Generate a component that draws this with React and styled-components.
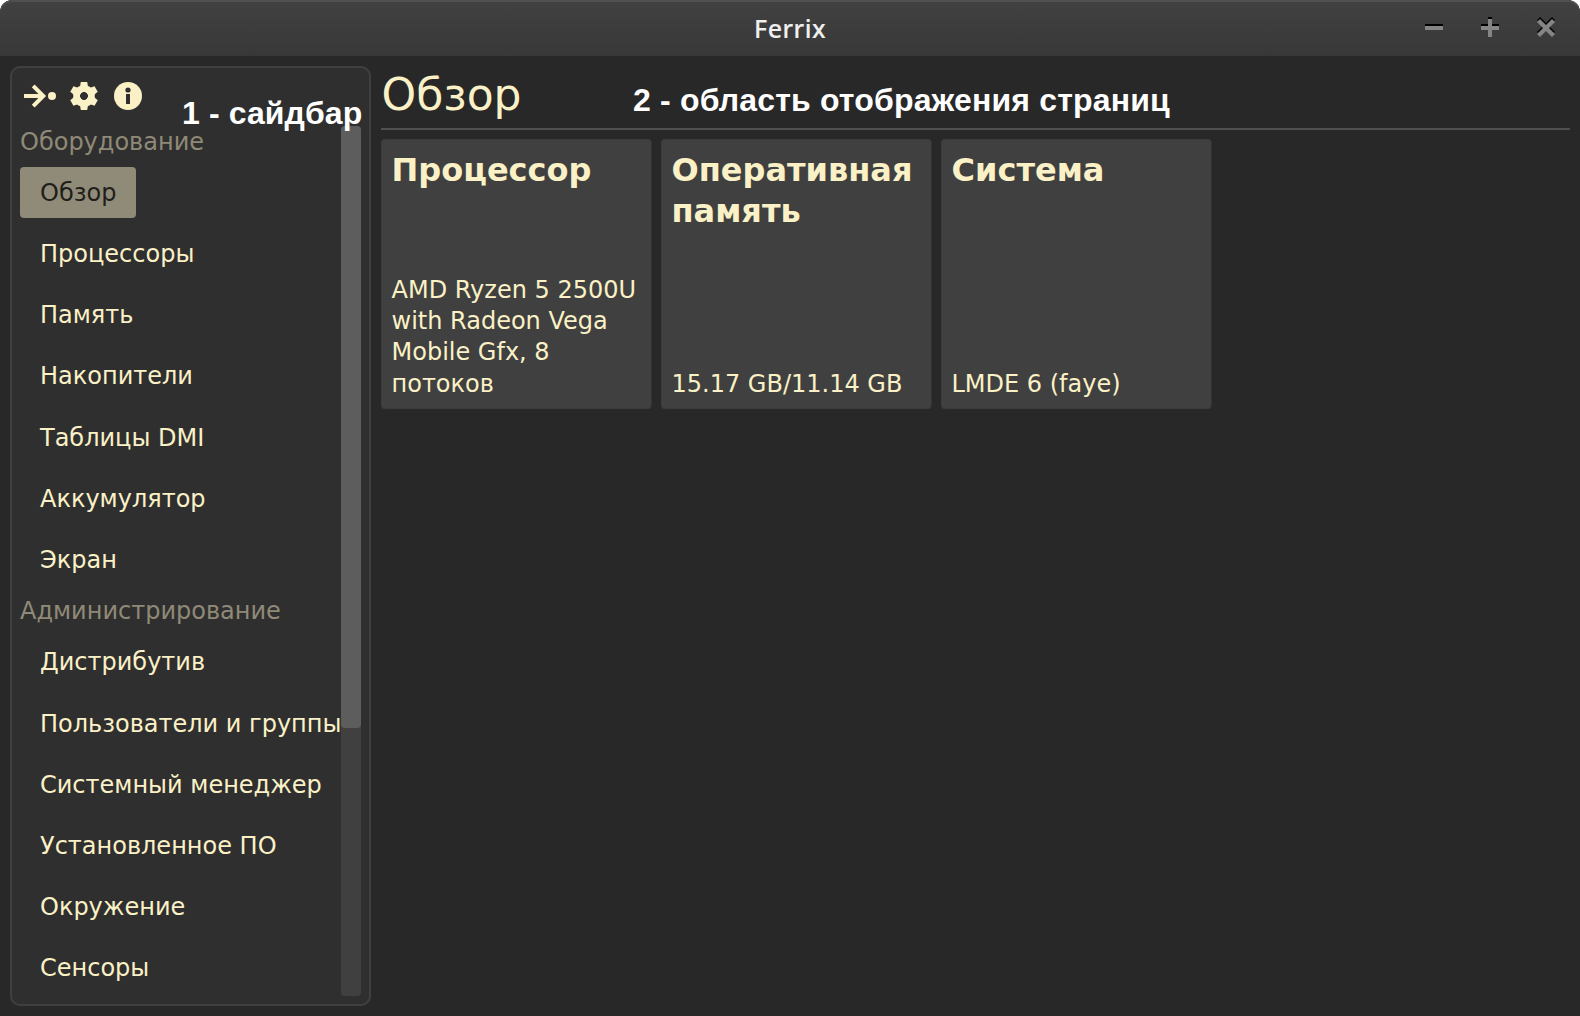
import React from 'react';
import styled, { createGlobalStyle } from 'styled-components';

const cream = '#fbf1c7';

const GlobalStyle = createGlobalStyle`
  * { box-sizing: border-box; }
  body {
    margin: 0;
    background: #fff;
    font-family: "DejaVu Sans", sans-serif;
    overflow: hidden;
  }
`;

const Window = styled.div`
  position: relative;
  display: flex;
  flex-direction: column;
  width: 1580px;
  height: 1016px;
  overflow: hidden;
  border-radius: 12px 12px 0 0;
  background: #282828;
  color: ${cream};
`;

const TitleBar = styled.header`
  flex: none;
  display: grid;
  grid-template-columns: 1fr auto 1fr;
  align-items: center;
  height: 56px;
  padding: 0 24px;
  border-radius: 12px 12px 0 0;
  background: linear-gradient(#414141, #383838);
  box-shadow: inset 0 2px 0 #505050;
`;

const WindowTitle = styled.h1`
  grid-column: 2;
  margin: 0;
  font: 500 25px/32px "Noto Sans", sans-serif;
  letter-spacing: 0.5px;
  -webkit-text-stroke: 0.15px #f0f0f0;
  color: #f0f0f0;
`;

const WindowControls = styled.div`
  display: flex;
  justify-content: flex-end;
  gap: 36px;
`;

const ControlIcon = styled.svg`
  display: block;
  width: 20px;
  height: 22px;
`;

const Body = styled.div`
  flex: 1;
  display: flex;
  gap: 10px;
  min-height: 0;
  padding: 10px;
`;

const Sidebar = styled.aside`
  flex: none;
  display: flex;
  flex-direction: column;
  gap: 10px;
  width: 361px;
  padding: 8px;
  border: 2px solid #404040;
  border-radius: 10px;
  background: #2f2f2f;
`;

const Toolbar = styled.div`
  flex: none;
  display: flex;
  align-items: center;
  gap: 4px;
  height: 40px;
`;

const ToolButton = styled.button`
  width: 40px;
  height: 40px;
  padding: 4px;
  border: 0;
  background: none;
  color: ${cream};

  svg { display: block; width: 32px; height: 32px; }
`;

const ScrollArea = styled.div`
  flex: 1;
  display: flex;
  min-height: 0;
`;

const Nav = styled.nav`
  flex: 1;
  display: flex;
  flex-direction: column;
  align-items: flex-start;
  gap: 10px;
  min-width: 0;
  overflow: hidden;
`;

const SectionLabel = styled.div`
  flex: none;
  height: 31.2px;
  padding-top: 0.62px;
  font-size: 24px;
  line-height: 31.2px;
  color: #8f8a77;
`;

const NavItem = styled.button`
  flex: none;
  padding: 10.64px 20px 9.36px;
  border: 0;
  border-radius: 4px;
  font: 24px/31.2px "DejaVu Sans", sans-serif;
  white-space: nowrap;
  color: ${({ $active }) => ($active ? '#1f1e1a' : cream)};
  background: ${({ $active }) => ($active ? '#8f8b78' : 'transparent')};
`;

const ScrollTrack = styled.div`
  flex: none;
  width: 20px;
  border-radius: 4px;
  background: #404040;
`;

const ScrollThumb = styled.div`
  height: 602px;
  border-radius: 4px;
  background: #5d5d5d;
`;

const Page = styled.main`
  flex: 1;
  min-width: 0;
`;

const PageTitle = styled.h2`
  margin: 0 0 9px;
  padding: 0 0 4.8px 0.5px;
  border-bottom: 2px solid #505050;
  font-size: 44px;
  font-weight: 400;
  line-height: 57.2px;
`;

const Cards = styled.div`
  display: flex;
  gap: 9px;
`;

const Card = styled.section`
  display: flex;
  flex-direction: column;
  justify-content: space-between;
  width: 271px;
  height: 270px;
  padding: 9.55px 9px 8.2px 9.5px;
  border: 1px solid #3c3c3c;
  border-right-color: #323232;
  border-radius: 4px;
  background: #404040;
`;

const CardTitle = styled.h3`
  margin: 0;
  font-size: 32px;
  line-height: 41.6px;
`;

const CardText = styled.p`
  margin: 0;
  font-size: 24px;
  line-height: 31.2px;
`;

const Annotation = styled.div`
  position: absolute;
  left: ${({ $x }) => $x}px;
  top: ${({ $y }) => $y}px;
  font: bold 32px/36px "Liberation Sans", sans-serif;
  letter-spacing: ${({ $spacing }) => $spacing}px;
  white-space: nowrap;
  color: #fff;
`;

const sections = [
  {
    label: 'Оборудование',
    items: ['Обзор', 'Процессоры', 'Память', 'Накопители', 'Таблицы DMI', 'Аккумулятор', 'Экран'],
  },
  {
    label: 'Администрирование',
    items: ['Дистрибутив', 'Пользователи и группы', 'Системный менеджер', 'Установленное ПО', 'Окружение', 'Сенсоры'],
  },
];

const cards = [
  { title: 'Процессор', text: 'AMD Ryzen 5 2500U with Radeon Vega Mobile Gfx, 8 потоков' },
  { title: 'Оперативная память', text: '15.17 GB/11.14 GB' },
  { title: 'Система', text: 'LMDE 6 (faye)' },
];

const controlShapes = [
  'M1 9H19V13H1Z',
  'M1 9H8V2H12V9H19V13H12V20H8V13H1Z',
  'M1 5L4 2L10 8L16 2L19 5L13 11L19 17L16 20L10 14L4 20L1 17L7 11Z',
];

function ArrowDotIcon() {
  return (
    <svg viewBox="0 0 32 32">
      <path d="M0 16H19M9.2 5.8L19.3 16L9.2 26.2" fill="none" stroke="currentColor" strokeWidth="4" />
      <circle cx="28" cy="16" r="4" fill="currentColor" />
    </svg>
  );
}

function GearIcon() {
  return (
    <svg viewBox="0 0 32 32">
      <g fill="currentColor">
        {[0, 60, 120].map((angle) => (
          <path
            key={angle}
            transform={`rotate(${angle} 16 16)`}
            d="M12.8 2H19.2L20.2 8V24L19.2 30H12.8L11.8 24V8Z"
            mask="url(#gear-hole)"
          />
        ))}
        <circle cx="16" cy="16" r="7.5" fill="none" stroke="currentColor" strokeWidth="6.6" />
      </g>
      <mask id="gear-hole" maskUnits="userSpaceOnUse" x="0" y="0" width="32" height="32">
        <rect width="32" height="32" fill="#fff" />
        <circle cx="16" cy="16" r="4.2" fill="#000" />
      </mask>
    </svg>
  );
}

function InfoIcon() {
  return (
    <svg viewBox="0 0 32 32">
      <circle cx="16" cy="16" r="14" fill="currentColor" />
      <circle cx="16" cy="10" r="2.6" fill="#2f2f2f" />
      <path d="M14 14H18V24H14Z" fill="#2f2f2f" />
    </svg>
  );
}

export default function App() {
  return (
    <>
      <GlobalStyle />
      <Window>
        <TitleBar>
          <WindowTitle>Ferrix</WindowTitle>
          <WindowControls>
            {controlShapes.map((d) => (
              <ControlIcon key={d} viewBox="0 0 20 22">
                <path d={d} fill="#000" transform="translate(0 -2)" />
                <path d={d} fill="#858585" />
              </ControlIcon>
            ))}
          </WindowControls>
        </TitleBar>
        <Body>
          <Sidebar>
            <Toolbar>
              <ToolButton><ArrowDotIcon /></ToolButton>
              <ToolButton><GearIcon /></ToolButton>
              <ToolButton><InfoIcon /></ToolButton>
            </Toolbar>
            <ScrollArea>
              <Nav>
                {sections.map((section) => (
                  <React.Fragment key={section.label}>
                    <SectionLabel>{section.label}</SectionLabel>
                    {section.items.map((item) => (
                      <NavItem key={item} $active={item === 'Обзор'}>{item}</NavItem>
                    ))}
                  </React.Fragment>
                ))}
              </Nav>
              <ScrollTrack><ScrollThumb /></ScrollTrack>
            </ScrollArea>
          </Sidebar>
          <Page>
            <PageTitle>Обзор</PageTitle>
            <Cards>
              {cards.map((card) => (
                <Card key={card.title}>
                  <CardTitle>{card.title}</CardTitle>
                  <CardText>{card.text}</CardText>
                </Card>
              ))}
            </Cards>
          </Page>
        </Body>
        <Annotation $x={182} $y={95} $spacing={0.1}>1 - сайдбар</Annotation>
        <Annotation $x={633} $y={82} $spacing={0.17}>2 - область отображения страниц</Annotation>
      </Window>
    </>
  );
}
